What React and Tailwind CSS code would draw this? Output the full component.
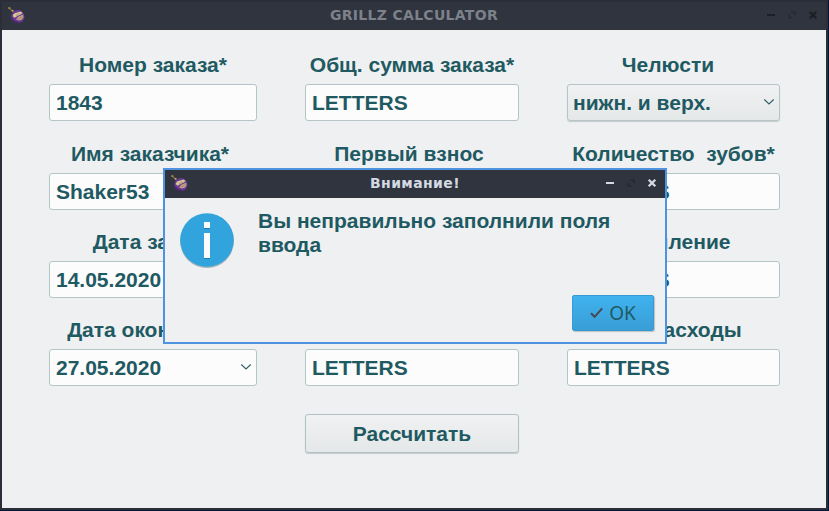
import React from "react";

function BombIcon({ className }) {
  return (
    <svg viewBox="0 0 17 17" className={className}>
      <path d="M1.2 1.2 L5.2 5" stroke="#85724a" strokeWidth="1.1" />
      <rect x="0.2" y="0.2" width="2.2" height="1.7" fill="#a8873c" />
      <rect x="3.9" y="2.9" width="1.6" height="1.5" fill="#c2b173" />
      <circle cx="9.9" cy="9.6" r="6.6" fill="#6a3a96" />
      <path d="M3.6 10.2a6.4 6.4 0 0 0 10.4 4.4 9 9 0 0 1-10.4-4.4z" fill="#4c2469" />
      <path d="M4.6 9 L6 6.6 L12.6 4.6 L14.6 6 L12.6 7.6 L9 9.2 L6.6 10.8 Z" fill="#d6c795" />
      <path d="M8 12.2 L10.2 9.7 L15.2 7.6 L15.4 10.3 L13.8 12.8 L10.5 13.6 Z" fill="#c0a280" />
      <path d="M9.6 12.2 L14.6 9.8 M8 8.6 L11.6 6.8" stroke="#957078" strokeWidth=".6" />
    </svg>
  );
}

function WindowControls({ color, dim }) {
  return (
    <svg viewBox="0 0 54 12" className="h-[12px] w-[54px]">
      <rect x="3" y="5" width="8" height="2" fill={color} />
      <path d="M26.5 2h5.5v5.5z M24 4.500l5.500 5.500h-5.500z" fill={dim} />
      <path d="M45.7 2.7 L52.3 9.3 M52.3 2.7 L45.7 9.3" stroke={color} strokeWidth="2.3" />
    </svg>
  );
}

function Chevron() {
  return (
    <svg viewBox="0 0 12 8" className="mb-[2px] h-[8px] w-[12px]" fill="none" stroke="#2f6068" strokeWidth="1.1">
      <path d="M1.3 1.5 L6 6 L10.7 1.5" />
    </svg>
  );
}

function Field({ label, value, select, date, shift = "" }) {
  const box = select
    ? "bg-linear-to-b from-[#f0f1f2] to-[#e5e8e8] pl-[5px] shadow-[0_1px_1px_rgba(0,0,0,0.16)]"
    : "bg-[#fcfcfc] pl-[6px]";
  return (
    <div className="flex flex-col">
      <div className={"h-[37px] pt-[6px] text-center leading-[24px] whitespace-pre " + shift}>{label}</div>
      <div className={"flex h-[37px] items-center justify-between rounded-[3px] border border-[#b3c5c7] pr-[4px] " + box}>
        <span className="leading-[24px]">{value}</span>
        {(select || date) && <Chevron />}
      </div>
    </div>
  );
}

const rows = [
  [
    { label: "Номер заказа*", value: "1843" },
    { label: "Общ. сумма заказа*", value: "LETTERS" },
    { label: "Челюсти", value: "нижн. и верх.", select: true, shift: "pr-[11px]" },
  ],
  [
    { label: "Имя заказчика*", value: "Shaker53", shift: "pr-[6px]" },
    { label: "Первый взнос", value: "LETTERS", shift: "pr-[6px]" },
    { label: "Количество  зубов*", value: "LETTERS" },
  ],
  [
    { label: "Дата заказа", value: "14.05.2020", date: true },
    { label: "", value: "LETTERS" },
    { label: "Крепление", value: "LETTERS", shift: "pl-[2px]" },
  ],
  [
    { label: "Дата окончания", value: "27.05.2020", date: true, shift: "pr-[7px]" },
    { label: "", value: "LETTERS" },
    { label: "Др. расходы", value: "LETTERS", shift: "pl-[6px]" },
  ],
];

function Dialog() {
  return (
    <div className="absolute top-[168px] left-[163px] flex h-[176px] w-[504px] flex-col border-2 border-[#4f92e0] bg-[#eff0f1]">
      <div className="grid h-[28px] shrink-0 grid-cols-[60px_1fr_62px] items-center bg-[#2f343f]">
        <BombIcon className="mb-px ml-[6px] h-[17px] w-[17px]" />
        <div className="pb-[3px] pl-[2px] text-center font-['DejaVu_Sans',sans-serif] text-[14px] leading-[16px] tracking-[0.4px] text-[#d3dae3]">
          Внимание!
        </div>
        <div className="pb-[3px]">
          <WindowControls color="#d3dae3" dim="#2a2c33" />
        </div>
      </div>
      <div className="flex pt-[11px] pl-[14px]">
        <svg viewBox="0 0 56 58" className="mt-[3px] h-[58px] w-[56px]">
          <circle cx="28" cy="29.2" r="26.9" fill="#a7b4ba" />
          <circle cx="28" cy="28" r="26.8" fill="#31a3dd" />
          <path d="M25 11h6v6h-6z M25 22h6v25h-6z" fill="#257ba8" />
          <path d="M25 10h6v6h-6z M25 21h6v25h-6z" fill="#fcfcfc" />
        </svg>
        <p className="ml-[23px] w-[380px] leading-[24px]">Вы неправильно заполнили поля ввода</p>
      </div>
      <button className="mt-auto mr-[11px] mb-[11px] flex h-[36px] w-[82px] items-center justify-center gap-[6px] self-end rounded-[2px] border border-[#369bd3] bg-linear-to-b from-[#40b2ef] to-[#399ed6] font-['Noto_Sans',sans-serif] text-[19px] font-normal shadow-[1px_1px_1px_rgba(0,0,0,0.2)]">
        <svg viewBox="0 0 13 12" className="h-[12px] w-[13px]" fill="none" stroke="#48494e" strokeWidth="2">
          <path d="M1 6.2 L4.6 9.8 L12.2 1.3" />
        </svg>
        OK
      </button>
    </div>
  );
}

export default function App() {
  return (
    <div className="relative h-[511px] w-[829px] overflow-hidden bg-[#03163b] pr-px pb-px font-['Liberation_Sans',Arial,sans-serif] text-[21px] font-bold text-[#1f5a63]">
      <div className="flex h-[510px] w-[828px] flex-col border-2 border-t-0 border-[#2b2d37] bg-[#eff0f1]">
        <div className="grid h-[30px] shrink-0 grid-cols-[60px_1fr_62px] items-center border-t-2 border-[#2b2e37] bg-[#2f343f]">
          <BombIcon className="mb-px ml-[6px] h-[17px] w-[17px]" />
          <div className="pb-[3px] pl-[2px] text-center font-['DejaVu_Sans',sans-serif] text-[14px] leading-[16px] tracking-[0.3px] text-[#7c818a]">
            GRILLZ CALCULATOR
          </div>
          <div className="pb-[3px]">
            <WindowControls color="#1d1f24" dim="#292c34" />
          </div>
        </div>
        <div className="grid grid-cols-[208px_214px_213px] gap-x-[48px] pt-[17px] pl-[47px]">
          <div className="col-span-3 grid grid-cols-subgrid pb-[15px]">
            {rows[0].map((f, i) => (
              <Field key={i} {...f} />
            ))}
          </div>
          <div className="col-span-3 grid grid-cols-subgrid gap-y-[14px]">
            {rows.slice(1).flat().map((f, i) => (
              <Field key={i} {...f} />
            ))}
          </div>
          <button className="col-start-2 mt-[28px] h-[39px] rounded-[3px] border border-[#b0c2c4] bg-linear-to-b from-[#f0f1f2] to-[#e5e8e8] leading-[24px] shadow-[0_1px_1px_rgba(0,0,0,0.16)]">
            Рассчитать
          </button>
        </div>
      </div>
      <Dialog />
    </div>
  );
}
